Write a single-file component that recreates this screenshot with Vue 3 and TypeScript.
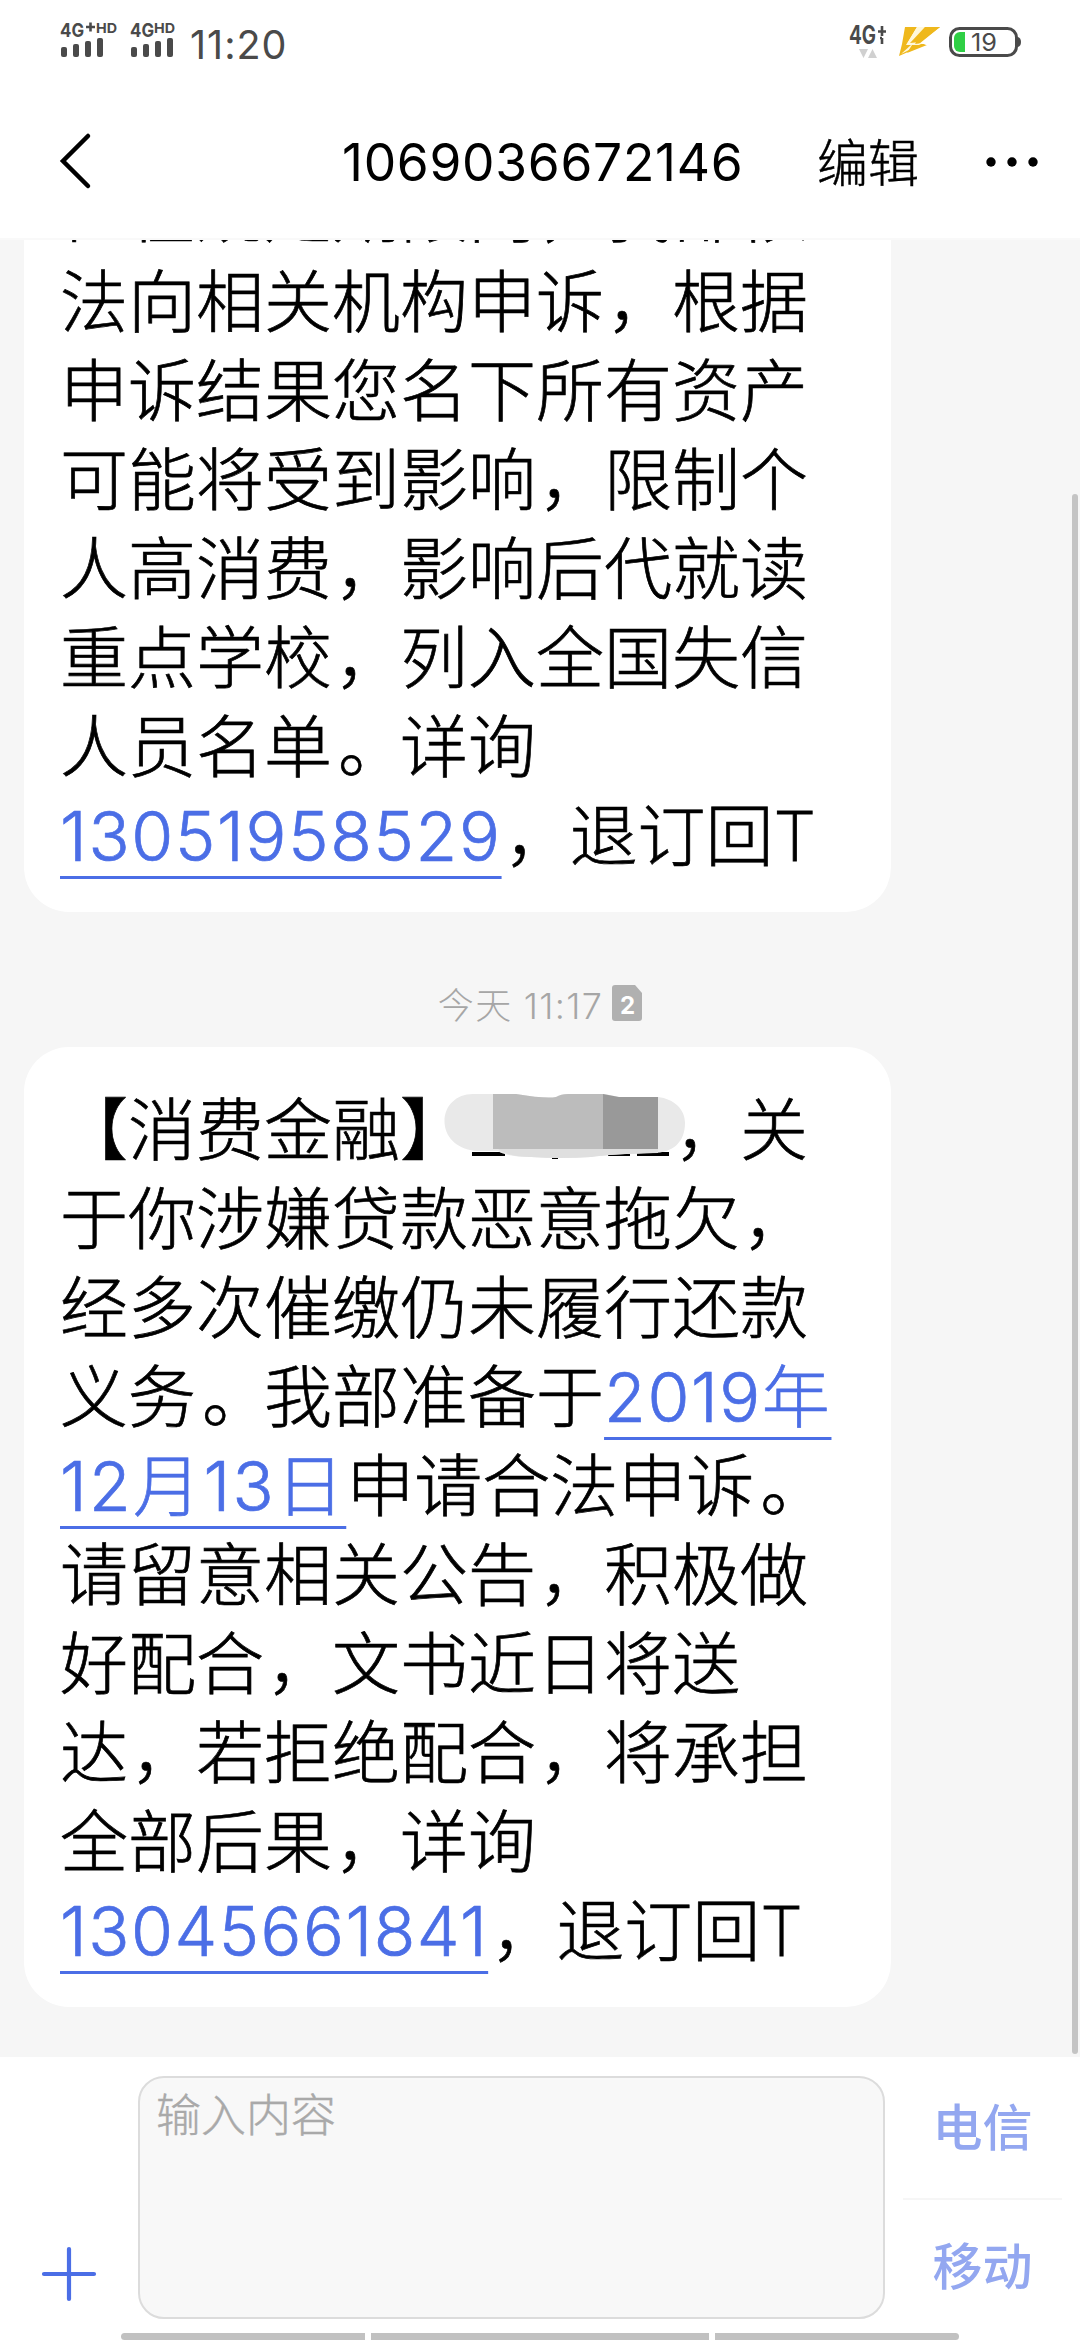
<script setup lang="ts">
interface Part {
  text?: string
  link?: boolean
  masked?: boolean
  spacing?: number
}
type Line = Part[]

const t = (text: string): Part => ({ text })
const a = (text: string, spacing: number): Part => ({ text, link: true, spacing })

const first: Line[] = [
  [t('但在规定期限内，我部依')],
  [t('法向相关机构申诉，根据')],
  [t('申诉结果您名下所有资产')],
  [t('可能将受到影响，限制个')],
  [t('人高消费，影响后代就读')],
  [t('重点学校，列入全国失信')],
  [t('人员名单。详询')],
  [a('13051958529', 1.7), t('，退订回T')],
]

const second: Line[] = [
  [t('【消费金融】'), { masked: true }, t('，关')],
  [t('于你涉嫌贷款恶意拖欠，')],
  [t('经多次催缴仍未履行还款')],
  [t('义务。我部准备于'), a('2019年', 1.6)],
  [a('12月13日', 2.3), t('申请合法申诉。')],
  [t('请留意相关公告，积极做')],
  [t('好配合，文书近日将送')],
  [t('达，若拒绝配合，将承担')],
  [t('全部后果，详询')],
  [a('13045661841', 1.5), t('，退订回T')],
]

const messages = [
  { id: 1, lines: first, time: '' },
  { id: 2, lines: second, time: '今天 11:17' },
]
const sims = ['电信', '移动']

// Punctuation and the Latin letter get their own spacing and weight.
const glyphClass: Record<string, string> = { '，': 'comma', '。': 'stop', T: 'latin' }
const runs = (text = ''): string[] => text.split(/([，。T])/).filter(Boolean)
</script>

<template>
  <div class="screen">
    <header class="status">
      <svg class="signals" width="120" height="40" viewBox="0 0 120 40">
        <g class="sig">
          <text x="0" y="17" font-size="19" textLength="24" lengthAdjust="spacingAndGlyphs">4G</text>
          <path d="M26 7h9M30.500 2.500v9" stroke="#4a4a4a" stroke-width="2.600" />
          <text x="36" y="12.500" font-size="13.500" textLength="21" lengthAdjust="spacingAndGlyphs">HD</text>
          <rect x="1" y="27" width="6" height="10" rx="2" />
          <rect x="13" y="24" width="6" height="13" rx="2" />
          <rect x="25" y="21" width="6" height="16" rx="2" />
          <rect x="37" y="18" width="6" height="19" rx="2" />
          <text x="70" y="17" font-size="19" textLength="24" lengthAdjust="spacingAndGlyphs">4G</text>
          <text x="94" y="12.500" font-size="13.500" textLength="21" lengthAdjust="spacingAndGlyphs">HD</text>
          <rect x="71" y="27" width="6" height="10" rx="2" />
          <rect x="83" y="24" width="6" height="13" rx="2" />
          <rect x="95" y="21" width="6" height="16" rx="2" />
          <rect x="107" y="18" width="6" height="19" rx="2" />
        </g>
      </svg>
      <span class="clock">11:20</span>
      <svg class="net" width="172" height="40" viewBox="0 0 172 40">
        <text class="g4" x="0" y="24" font-size="25" textLength="27" lengthAdjust="spacingAndGlyphs">4G</text>
        <path d="M29 11.500h8M33 6v10M33 18v6M31 18h2" stroke="#4a4a4a" stroke-width="2.600" fill="none" />
        <path d="M10 29h9l-4.500 9zM19 38h9l-4.500-9z" fill="#d0d0d0" />
        <path d="M56 7H68L58 24L76 7H91L70 24H77L50 36L53 24z" fill="#efb81c" />
        <path d="M68 7L57 25H62L52 34L74 23L66 24L76 7z" fill="#fff8dc" />
        <path d="M76 7H91L71 22L61 23z" fill="#efb81c" />
        <path d="M63 25H78L58 33z" fill="#efb81c" />
        <rect x="101.500" y="8.500" width="66" height="27" rx="9" fill="none" stroke="#4a4a4a" stroke-width="3" />
        <path d="M169 17q3 1 3 5t-3 5z" fill="#4a4a4a" />
        <path d="M116 12v20h-5a6 6 0 0 1-6-6v-8a6 6 0 0 1 6-6z" fill="#2fcf45" />
        <text class="pct" x="122" y="31" font-size="24.500" textLength="26" lengthAdjust="spacingAndGlyphs">19</text>
      </svg>
    </header>

    <nav class="titlebar">
      <svg class="back" width="34" height="58" viewBox="0 0 34 58">
        <path d="M30 4L5 29L30 54" fill="none" stroke="#000" stroke-width="4.500" stroke-linecap="round" />
      </svg>
      <h1 class="title">1069036672146</h1>
      <span class="edit">编辑</span>
      <svg class="more" width="54" height="12" viewBox="0 0 54 12">
        <circle cx="6" cy="6" r="4.700" /><circle cx="27" cy="6" r="4.700" /><circle cx="48" cy="6" r="4.700" />
      </svg>
    </nav>

    <main class="thread">
      <template v-for="m in messages" :key="m.id">
        <div v-if="m.time" class="stamp">
          <span>{{ m.time }}</span>
          <svg width="30" height="36" viewBox="0 0 30 36">
            <path d="M3 0H23L30 8V33a3 3 0 0 1-3 3H3a3 3 0 0 1-3-3V3a3 3 0 0 1 3-3z" fill="#b0b0b0" />
            <text x="15.500" y="29" text-anchor="middle" class="simno">2</text>
          </svg>
        </div>
        <section class="bubble">
          <p v-for="(line, i) in m.lines" :key="i" class="line">
            <template v-for="(p, j) in line" :key="j">
              <span v-if="p.masked" class="masked">
                <svg width="244" height="68" viewBox="441 1092 244 68">
                  <path d="M471 1152h33v4h-33zM551 1156h6v3h-6zM607 1152h22v4h-22zM636 1152h32v4h-32z" />
                  <path d="M472 1094H515Q545 1099 555 1097Q560 1094 567 1094H604L618 1097H657C673 1099 684 1109 684 1123C684 1142 672 1153 652 1153Q610 1154 590 1157Q560 1159 530 1157Q505 1157 497 1151H474C454 1148 443.500 1136 443.500 1121C443.500 1106 455 1094 472 1094z" fill="#e9e9e9" />
                  <path d="M497 1149H657V1153Q610 1154 590 1157Q560 1159 530 1157Q507 1157 497 1149z" fill="#dfdfdf" />
                  <path d="M492 1094H515Q545 1099 555 1097Q560 1094 567 1094H602V1149H492z" fill="#bcbcbc" />
                  <path d="M602 1094L618 1097H657V1149H602z" fill="#999" />
                </svg>
              </span>
              <a v-else-if="p.link" class="link" :style="{ letterSpacing: p.spacing + 'px' }">{{ p.text }}</a>
              <span v-else><span v-for="(r, k) in runs(p.text)" :key="k" :class="glyphClass[r]">{{ r }}</span></span>
            </template>
          </p>
        </section>
      </template>
      <i class="scrollbar"></i>
    </main>

    <footer class="composer">
      <svg class="plus" width="56" height="56" viewBox="0 0 56 56">
        <path d="M28 3V53M3 28H53" stroke="#4b6ee6" stroke-width="4.200" stroke-linecap="round" />
      </svg>
      <div class="input">输入内容</div>
      <div class="sims">
        <span v-for="s in sims" :key="s" class="sim">{{ s }}</span>
      </div>
      <div class="tabs"><i></i><i></i><i></i></div>
    </footer>
  </div>
</template>

<style>
body {
  background: #fff;
}
</style>

<style scoped>
.screen {
  width: 1080px;
  height: 2340px;
  display: flex;
  flex-direction: column;
  overflow: hidden;
  background: #fff;
  color: #000;
  font-family: Inter, 'Noto Sans CJK SC', sans-serif;
}
.status {
  height: 80px;
  flex: none;
  display: flex;
  align-items: flex-start;
  padding: 20px 59px 0 60px;
  box-sizing: border-box;
  color: #4a4a4a;
}
.sig,
.g4 {
  fill: #4a4a4a;
  font-weight: 700;
}
.pct {
  fill: #4a4a4a;
}
.clock {
  margin-left: 10px;
  padding-top: 1px;
  font-size: 39.5px;
  line-height: 48px;
  letter-spacing: 1px;
}
.net {
  margin-left: auto;
}
.titlebar {
  height: 160px;
  flex: none;
  display: flex;
  align-items: center;
  box-sizing: border-box;
  padding: 3px 41px 0 58px;
  border-bottom: 2px solid #f9f9f9;
}
.title {
  margin: 3px 0 0 250px;
  width: 398px;
  font-size: 51.5px;
  font-weight: 400;
  line-height: 60px;
  letter-spacing: 0.7px;
  white-space: nowrap;
}
.edit {
  margin: 7px 0 0 77px;
  width: 104px;
  font-size: 51px;
  line-height: 60px;
  font-weight: 300;
  -webkit-text-stroke: 0.5px currentColor;
}
.more {
  margin-left: auto;
  margin-top: 3px;
}
.thread {
  position: relative;
  height: 1817px;
  flex: none;
  display: flex;
  flex-direction: column;
  justify-content: flex-end;
  align-items: flex-start;
  box-sizing: border-box;
  padding: 0 24px 50px;
  overflow: hidden;
  background: #f6f6f6;
}
.bubble {
  flex: none;
  width: 867px;
  box-sizing: border-box;
  padding: 38.5px 0 30.5px 36px;
  border-radius: 45px;
  background: #fff;
}
.bubble:first-child .line:first-child {
  margin-bottom: 1px;
}
.line {
  margin: 0;
  height: 89.1px;
  display: flex;
  line-height: 89.1px;
  font-size: 68px;
  font-weight: 300;
  white-space: nowrap;
  -webkit-text-stroke: 0.7px currentColor;
}
.link {
  color: #4b6ee6;
  text-decoration: underline;
  text-decoration-thickness: 3px;
  text-underline-offset: 15px;
}
.comma {
  margin: 0 -3px 0 3px;
}
.stop {
  margin: 0 -6px 0 6px;
}
.latin {
  font-weight: 200;
  -webkit-text-stroke: 1px currentColor;
}
.masked {
  position: relative;
  width: 204px;
  -webkit-text-stroke: 0;
}
.masked svg {
  position: absolute;
  left: -26px;
  top: 6px;
}
.stamp {
  flex: none;
  align-self: center;
  height: 135px;
  display: flex;
  align-items: center;
  gap: 9px;
  padding-top: 46px;
  box-sizing: border-box;
  font-size: 36px;
  font-weight: 300;
  letter-spacing: 1.3px;
  color: #a6a6a6;
}
.simno {
  fill: #fff;
  font-size: 24px;
  font-weight: 700;
  letter-spacing: 0;
}
.scrollbar {
  position: absolute;
  left: 1072px;
  top: 254px;
  width: 6px;
  height: 1560px;
  border-radius: 3px;
  background: #c4c4c4;
}
.composer {
  position: relative;
  flex: 1;
  display: flex;
  align-items: flex-start;
  padding-top: 19px;
}
.plus {
  margin: 170px 41px 0 41px;
}
.input {
  width: 747px;
  height: 243px;
  box-sizing: border-box;
  padding: 5px 16px;
  border: 2px solid #dcdcdc;
  border-radius: 26px;
  background: #f8f8f8;
  color: #a9a9a9;
  font-size: 45px;
  font-weight: 300;
  line-height: 66px;
  -webkit-text-stroke: 0.4px currentColor;
}
.sims {
  margin-left: 18px;
  width: 159px;
}
.sim {
  display: block;
  height: 122px;
  line-height: 105px;
  text-align: center;
  font-size: 50px;
  font-weight: 500;
  color: #93a7f0;
}
.sim + .sim {
  border-top: 2px solid #f6f6f6;
  line-height: 134px;
}
.tabs {
  position: absolute;
  left: 121px;
  bottom: 0;
  width: 838px;
  height: 7px;
  display: flex;
  gap: 6px;
}
.tabs i {
  width: 244px;
  background: #c1c1c1;
}
.tabs i:nth-child(2) {
  width: 338px;
}
.tabs i:first-child {
  border-radius: 4px 0 0 4px;
}
.tabs i:last-child {
  border-radius: 0 4px 4px 0;
}
</style>
